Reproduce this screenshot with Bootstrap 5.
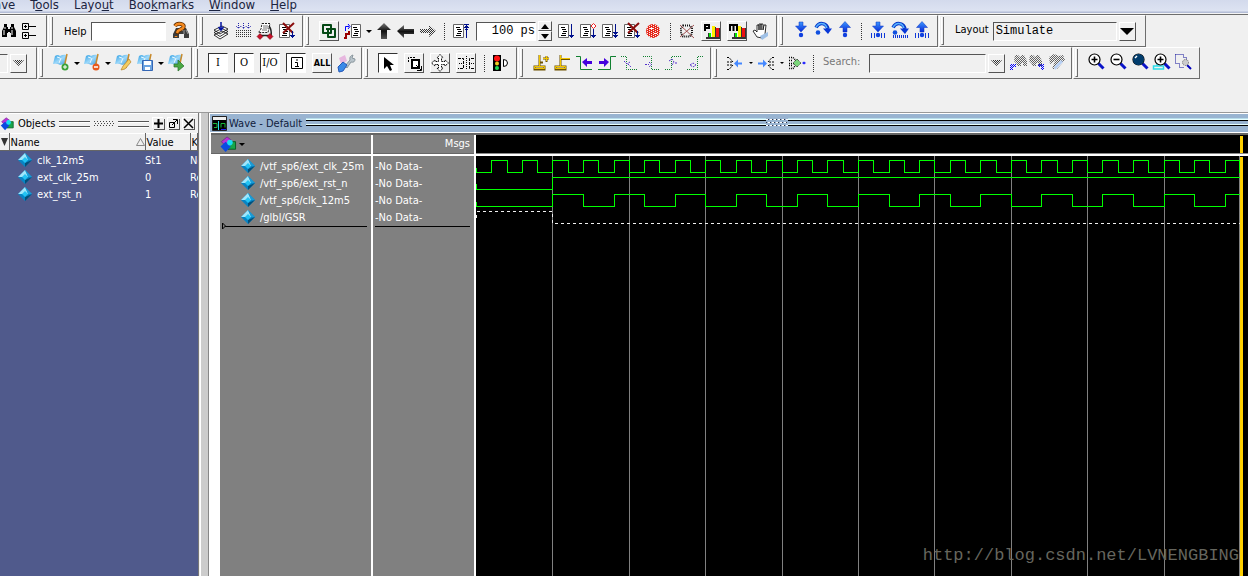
<!DOCTYPE html>
<html lang="en">
<head>
<meta charset="utf-8">
<meta name="viewport" content="width=device-width, initial-scale=1">
<title>Wave - Default</title>
<link href="https://cdn.jsdelivr.net/npm/bootstrap@5.3.0/dist/css/bootstrap.min.css" rel="stylesheet">
<style>
:root{--face:#f0f0f0;--edge:#6d6d6d;--grey:#808080;--slate:#505a8c;--ui:"DejaVu Sans Condensed","DejaVu Sans",sans-serif;--code:"Liberation Mono",monospace}
body{font-family:var(--ui);font-size:11px;line-height:17px;color:#000;background:var(--face);overflow:hidden}
button,input,select{font:inherit;color:inherit;border-radius:0;padding:0}
button{background:none;border:0}
/* menu */
.menubar{height:15px;gap:15px;margin-left:-6px;font-size:13px;line-height:9px;background:linear-gradient(#d3daec,#dde3f2 11px,#b4bdd6 12px,#b4bdd6 13px,#f4f4f4 13px,#f4f4f4 14px,#6d6d6d 14px)}
.menubar a{color:#1c2440;text-decoration:none}
/* tool bars */
.bars{height:32px;gap:1px}
.bar{flex:none;border:1px solid #fff;border-right-color:var(--edge);border-bottom-color:var(--edge)}
.bar.grip::before{content:"";flex:none;width:3px;height:28px;margin:0 7px 0 1px;border-left:1px solid #fff;border-right:1px solid var(--edge);border-bottom:1px solid var(--edge)}
.b-edit{width:47px}.b-help{width:149px}.b-compile{width:105px}.b-run{width:473px}.b-step{width:160px}.b-layout{width:207px}
.b-filter{width:37px}.b-mark{width:154px}.b-types{width:169px}.b-mode{width:154px}.b-cursor{width:193px}.b-search{width:360px}.b-zoom{width:127px}
.tool{flex:none;width:22px;height:22px}
.tool.slim{width:18px}
.tool svg,.boxed svg{width:20px;height:20px;display:block;margin:auto}
.tool.slim svg{margin-left:-1px}
.boxed{flex:none;width:20px;height:20px;margin:0 3px;border:1px solid #fff;border-right-color:#555;border-bottom-color:#555}
.boxed svg{margin:-1px}
.pressed{background:#fff;border-color:#333 #fff #fff #333}
.letter{line-height:18px;text-align:center;font-family:"DejaVu Serif Condensed","DejaVu Serif",serif}
.allbtn{font-size:9px;line-height:18px;font-weight:700}
.caret{width:9px;height:22px}
.caret::after{content:"";display:block;margin:auto;width:5px;border:3px solid transparent;border-top-color:#000;border-bottom:0}
.caret.tiny::after{border-width:2px;border-bottom:0;width:4px}
.split{width:11px;height:17px;background:repeating-linear-gradient(#333 0 1px,transparent 1px 2px) center/1px 100% no-repeat}
.field{border:1px solid #fff;border-top-color:#555;border-left-color:#555;height:19px;background:#fff;outline:0}
.field.flat{background:var(--face)}
.mono{font-family:var(--code);font-size:12px}
.w-help{width:75px}.w-len{width:60px}.w-lay{width:124px;padding-left:2px;appearance:none}.w-filter{width:8px}.w-search{width:117px}
.drop{width:17px;height:19px;margin-left:2px;border:1px solid #fff;border-right-color:#555;border-bottom-color:#555}
.drop svg{display:block;margin:auto}
.spins{margin:0 3px 0 2px}
.spin{width:14px;height:10px;border:1px solid #fff;border-right-color:#555;border-bottom-color:#555}
.spin::after{content:"";display:block;width:8px;margin:auto;border:4px solid transparent;border-top:0;border-bottom:5px solid #000}
.spin.down::after{border-bottom:0;border-top:5px solid #000}
.dim{color:#777}
/* work area */
.work{margin-top:33px;border-top:1px solid #999;min-height:0}
.objects{width:199px;border-right:1px solid #777;background:var(--slate)}
.ptitle{height:20px;background:var(--face);border-top:1px solid #fff}
.ptitle>svg{width:14px;height:16px}
.lines{height:6px;border-top:1px solid #555;border-bottom:1px solid #555;box-shadow:0 1px #fff,inset 0 1px #fff}
.dots{width:20px;height:6px;background:repeating-linear-gradient(90deg,#444 0 1px,transparent 1px 3px) 0 0/100% 1px no-repeat,repeating-linear-gradient(90deg,transparent 0 1px,#444 1px 2px,transparent 2px 3px) 0 2px/100% 1px no-repeat,repeating-linear-gradient(90deg,#444 0 1px,transparent 1px 3px) 0 4px/100% 1px no-repeat}
.wbtn{width:11px;height:11px;margin-left:4px;box-shadow:1px 1px #555,-1px -1px #fff}
.wbtn svg{display:block;width:11px;height:11px}
.otable{table-layout:fixed;width:100%;color:#fff;border-collapse:collapse}
.otable th{height:17px;line-height:15px;background:var(--face);color:#000;font-weight:400;border-right:1px solid #666;border-bottom:1px solid #666;border-top:1px solid #fff;padding:0 0 0 1px;white-space:nowrap;overflow:hidden}
.otable td{height:17px;padding:0;white-space:nowrap;overflow:hidden}
.otable tbody::before{content:"";display:block;height:1px}
.c-sort{width:9px}.c-name{width:136px}.c-value{width:45px}
.gem{width:16px;height:16px;flex:none}
.sash{width:7px;margin:0 0 0 2px;background:#ccc;box-shadow:-1px 0 #fff}
.wave{border-left:1px solid #888;background:#fff;min-width:0}
.wtitle{height:19px;margin-left:1px;border-top:1px solid #fff;background:#99b4d1;color:#10203c}
.wtitle>svg{margin:1px 1px 0 2px}
.wtitle .lines{border-color:#000;box-shadow:0 -1px #e6ffff,0 -2px #b7dcea,inset 0 -1px #e6ffff}
.wdots{width:22px;height:8px;background:repeating-linear-gradient(90deg,#fff 0 2px,#334 2px 3px,transparent 3px 4px) 0 0/100% 1px no-repeat,repeating-linear-gradient(90deg,#334 0 1px,transparent 1px 2px,#fff 2px 4px) 0 3px/100% 1px no-repeat,repeating-linear-gradient(90deg,#fff 0 2px,#334 2px 3px,transparent 3px 4px) 0 6px/100% 1px no-repeat}
.panes{margin:1px 0 0 2px;min-height:0;border-top:2px solid #666}
.names{width:162px;border-right:2px solid #fff}
.msgs{width:103px;border-right:2px solid #fff}
.phead{height:19px;background:var(--grey);color:#fff;border-bottom:1px solid #666;margin-bottom:2px}
.pbody{background:var(--grey);color:#fff;padding-top:2px}
.names .pbody{margin-left:9px}
.sig{height:17px;white-space:nowrap}
.endline{height:1px;background:#000;margin-right:4px}
.names .endline{margin-left:2px}
.msgs .pbody{padding-left:2px}
.canvas{background:#000;min-width:0}
.canvas svg{display:block}
.ruler{height:19px;background:#000;border-bottom:1px solid #888}
.cursorhead{width:3px;height:17px;margin:1px 0 0 764px;background:#ffd000}
.plot{border-top:2px solid #fff;overflow:hidden;min-height:0}
.plot svg{width:100%;height:100%}
.stamp{right:9px;bottom:9px;font:17px/22px var(--code);color:#66665e}
</style>
</head>
<body class="vh-100 d-flex flex-column">
<svg width="0" height="0" class="position-absolute" aria-hidden="true">
<defs>
<linearGradient id="gb" x2="0" y2="1"><stop stop-color="#3c98ff"/><stop offset="1" stop-color="#0828d8"/></linearGradient>
<linearGradient id="gk" x2="0" y2="1"><stop stop-color="#777"/><stop offset=".5" stop-color="#111"/><stop offset="1" stop-color="#555"/></linearGradient>
<linearGradient id="gf" x2="1" y2="1"><stop stop-color="#2a9be0"/><stop offset=".5" stop-color="#9cd8fa"/><stop offset="1" stop-color="#3b98d8"/></linearGradient>
<pattern id="dither" width="2" height="2" patternUnits="userSpaceOnUse"><path d="M0 0h1v1H0zM1 1h1v1H1z" fill="#333"/></pattern>
<pattern id="ditherb" width="2" height="2" patternUnits="userSpaceOnUse"><path d="M0 0h1v1H0zM1 1h1v1H1z" fill="#00f"/></pattern>
<pattern id="ditherr" width="4" height="2" patternUnits="userSpaceOnUse"><path d="M0 0h3v1H0zM2 1h3v1H2zM0 1h1v1H0z" fill="#e8281a"/></pattern>
<symbol id="bino" viewBox="0 0 20 20"><path d="M5 3h3v3h1v2h2V6h1V3h3v3l1 2 1 2v6h-5v-4h-1v-1H9v1H8v4H3v-6l1-2 1-2z" fill="#000"/><path d="M6 6v2M5 9v5M13 6v2M13 9v5" stroke="#fff"/></symbol>
<symbol id="tree" viewBox="0 0 20 20"><path d="M3.500 2.500h6v6h-6zM3.500 11.500h6v6h-6zM5 5.500h3M6.500 4v3M5 14.500h3M6.500 13v3M10 5.500h7M10 14.500h7" fill="none" stroke="#000"/></symbol>
<symbol id="find" viewBox="0 0 20 20"><path d="M5 7h3v3h4V7h3l3 6v4h-5v-4H8v4H2v-4z" fill="#3c3c3c"/><path d="M13 9v4M15 9l2 4" stroke="#999"/><path d="M4 5q2-3 6-2 4 1 2 4L7 10l-1 3" fill="none" stroke="#5b2c00" stroke-width="4"/><path d="M4 5q2-3 6-2 4 1 2 4L7 10l-1 2M5 15v1" fill="none" stroke="#f58a1f" stroke-width="2.500"/></symbol>
<symbol id="stack" viewBox="0 0 20 20"><path d="M3 14l8-4 6 3-8 5zM3 11.500l8-4 6 3-8 5zM3 9l8-4 6 3-8 5z" fill="#fff" stroke="#000" stroke-width=".8"/><path d="M10 1v8M7.500 6l2.500 3 2.500-3" stroke="#0010a0" stroke-width="1.500" fill="none"/></symbol>
<symbol id="grid" viewBox="0 0 20 20"><path d="M3 9.500h15M3 11.500h15M3 13.500h15M3 15.500h15" stroke="#333" stroke-dasharray="1 1"/><path d="M5.500 2v5M10.500 2v5M15.500 2v5M3 5l2.500 2.500L8 5l2.500 2.500L13 5l2.500 2.500L18 5" stroke="#22a" stroke-dasharray="1 1" fill="none"/></symbol>
<symbol id="cart" viewBox="0 0 20 20"><path d="M7 2.500h8l-2 9H3.500L6 8z" fill="#fff" stroke="#222" stroke-dasharray="2 1"/><path d="M8 5h5M8 7h5M7 9h5" stroke="#777"/><path d="M14 5q3 4 2 10M4 14.500h11" stroke="#222" stroke-width="1.500" fill="none"/><path d="M5 12.500l3 3-3 3-3-3zM15 12.500l3 3-3 3-3-3z" fill="#c8102b" stroke="#600" stroke-width=".5"/></symbol>
<symbol id="page" viewBox="0 0 20 20"><path d="M2.500 3.500h10v13h-10z" fill="#fff" stroke="#666"/><path d="M5 6.500h4M6 8.500h4M7 10.500h4M6 12.500h4M5 14.500h5" stroke="#000"/></symbol>
<symbol id="pagex" viewBox="0 0 20 20"><use href="#page"/><path d="M6 2l10 10M17 2L6 12" stroke="#8a0c0c" stroke-width="2"/><path d="M15.500 10v7M13 14.500h5M14 15.500h3" stroke="#00108c"/></symbol>
<symbol id="run" viewBox="0 0 20 20"><use href="#page"/><path d="M15.500 3v14M13 14.500h5M14 15.500h3" stroke="#00108c"/></symbol>
<symbol id="run2" viewBox="0 0 20 20"><use href="#page"/><path d="M15.500 3v14M13 11.500h5M14 12.500h3M13 14.500h5M14 15.500h3" stroke="#00108c"/></symbol>
<symbol id="runc" viewBox="0 0 20 20"><use href="#page"/><path d="M15.500 8v9M13 14.500h5M14 15.500h3" stroke="#00108c"/><path d="M15.500 2.500l2.500 2.500-2.500 2.500L13 5z" fill="#fff" stroke="#e22"/></symbol>
<symbol id="restart" viewBox="0 0 20 20"><use href="#page"/><path d="M15.500 4v13M13 3.500h5M14 5.500h3M13 6.500h5M14 8.500h3" stroke="#00108c"/></symbol>
<symbol id="link" viewBox="0 0 20 20"><path d="M4 4h8v8H4zM9 8h7v8H9z" fill="none" stroke="#064a16" stroke-width="2" stroke-linejoin="round"/><path d="M7 8h5v4" stroke="#064a16" stroke-width="2" fill="none"/></symbol>
<symbol id="stepin" viewBox="0 0 20 20"><path d="M8.500 3.500h9v13h-9z" fill="#fff" stroke="#666"/><path d="M10 6.500h4M11 8.500h4M12 10.500h4M11 12.500h4M10 14.500h5" stroke="#000"/><path d="M2.500 10V5.500H6M5 3l2 2.500L5 8" stroke="#00f" fill="none"/><path d="M6 10v3H3v4H1" stroke="#900" stroke-width="2" fill="none"/></symbol>
<symbol id="up" viewBox="0 0 20 20"><path d="M10 2l7 7h-4v9H7V9H3z" fill="url(#gk)"/></symbol>
<symbol id="left" viewBox="0 0 20 20"><path d="M1 10l7-6v4h10v5H8v4z" fill="url(#gk)"/></symbol>
<symbol id="right" viewBox="0 0 20 20"><path d="M18 10l-7-6v4H2v4h9v4z" fill="url(#dither)"/></symbol>
<symbol id="stop" viewBox="0 0 20 20"><circle cx="9" cy="10" r="7" fill="url(#ditherr)"/><path d="M6 7.500h3M10 12.500h3" stroke="#fff"/></symbol>
<symbol id="nofind" viewBox="0 0 20 20"><path d="M6 4.500h7l2 3v5l-2 3H6l-2-3v-5z" fill="none" stroke="#111" stroke-width="2" stroke-dasharray="1 1"/><path d="M3 4l14 13M17 4L3 16" stroke="#8a2a2a" stroke-width=".8"/></symbol>
<symbol id="bars" viewBox="0 0 20 20"><path d="M7 12h3v6H7zM11 6h4v12h-4zM15 7h4v11h-4zM5 16h14v2H5z" fill="#333"/><path d="M8 12h2v4H8z" fill="#0e0"/><path d="M11 5h3v11h-3z" fill="#fe0"/><path d="M15 7h3v9h-3z" fill="#e11"/></symbol>
<symbol id="prof" viewBox="0 0 20 20"><use href="#bars"/><path d="M4 10V4h4v3H5" fill="none" stroke="#000" stroke-width="2"/></symbol>
<symbol id="mem" viewBox="0 0 20 20"><use href="#bars"/><path d="M3 10V4h7v6M6.500 4v6" fill="none" stroke="#000" stroke-width="2"/></symbol>
<symbol id="hand" viewBox="0 0 20 20"><path d="M6 16l-4-6 2-1 2 2V4h2v5V3h2v6V3h2v6l1-5h2l-1 9-3 4z" fill="#fff" stroke="#000" stroke-width=".8"/><path d="M9 15l8-4v4l-6 4z" fill="#9fc0e6"/></symbol>
<symbol id="bdown" viewBox="0 0 20 20"><path d="M8 1h4v4h3.500L10 11 4.500 5H8z" fill="url(#gb)" stroke="#0830c0" stroke-width=".5"/><circle cx="10" cy="14" r="2.200" fill="#1040e0"/></symbol>
<symbol id="bup" viewBox="0 0 20 20"><path d="M10 .5l5.500 6H12v4.500H8V6.500H4.500z" fill="url(#gb)" stroke="#0830c0" stroke-width=".5"/><circle cx="10" cy="14" r="2.200" fill="#1040e0"/></symbol>
<symbol id="bover" viewBox="0 0 20 20"><path d="M3 6.500Q6 1 11 3q3 1 4 5" fill="none" stroke="#0838c8" stroke-width="3.500"/><path d="M3 6.500Q6 1 11 3q2 1 3 4" fill="none" stroke="#58b4ff" stroke-width="1.500"/><path d="M10 7.500h9l-4 5.500z" fill="#0838d8"/><circle cx="5" cy="11.500" r="2.300" fill="#1050e0"/></symbol>
<symbol id="ticks" viewBox="0 0 20 20"><path d="M3.500 12v5M6.500 12v5M13.500 12v5M16.500 12v5" stroke="#1038d8"/></symbol>
<symbol id="bdown2" viewBox="0 0 20 20"><use href="#bdown"/><use href="#ticks"/></symbol>
<symbol id="bup2" viewBox="0 0 20 20"><use href="#bup"/><use href="#ticks"/></symbol>
<symbol id="bover2" viewBox="0 0 20 20"><use href="#bover"/><path d="M3 15.500h15" stroke="#1038d8" stroke-width="3" stroke-dasharray="1 1"/></symbol>
<symbol id="flag" viewBox="0 0 20 20"><path d="M4 3q3-2 5 0 3-2 7-1l-2 10q-3-1-5 0-3-2-7-1z" fill="url(#gf)"/><path d="M6 4l3 1M10 5l-2 5" stroke="#e8f8ff"/><path d="M16 1l-3 14" stroke="#c88a2c" stroke-width="1.500"/></symbol>
<symbol id="fadd" viewBox="0 0 20 20"><use href="#flag"/><circle cx="14" cy="14" r="3.500" fill="#3aa23a"/><path d="M12 14h4M14 12v4" stroke="#fff"/></symbol>
<symbol id="fdel" viewBox="0 0 20 20"><use href="#flag"/><circle cx="14" cy="14" r="3.500" fill="#e8591a"/><path d="M12 14h4" stroke="#fff" stroke-width="1.500"/></symbol>
<symbol id="fedit" viewBox="0 0 20 20"><use href="#flag"/><path d="M8 17l2-4 6-7 2 3-6 7z" fill="#f3cd62" stroke="#b5812a" stroke-width=".7"/></symbol>
<symbol id="fsave" viewBox="0 0 20 20"><use href="#flag"/><path d="M7.500 7.500h10v10h-10z" fill="#6ba3e0" stroke="#3567b5"/><path d="M9 8h7v4H9zM10 14h5v3h-5z" fill="#fff"/></symbol>
<symbol id="fgo" viewBox="0 0 20 20"><use href="#flag"/><path d="M8 11h4V7l6 6-6 5v-4H8z" fill="#4aa843" stroke="#27702a" stroke-width=".7"/></symbol>
<symbol id="wrench" viewBox="0 0 20 20"><path d="M3 5l6-3 2 6-6 3z" fill="#e7b7df"/><path d="M9 13l5-6q-1-4 3-5l-1 3 3 1q0 4-4 3l-4 6z" fill="#b9c4cb" stroke="#8a979e"/><path d="M2 14l5-5 4 3-4 6-4 1z" fill="#3a8ae8" stroke="#2458b8"/></symbol>
<symbol id="infobox" viewBox="0 0 20 20"><path d="M5.500 4.500h11v11h-11z" fill="none" stroke="#000"/><path d="M11 6v2M9 9.500h2.500V13M9 13.500h4" stroke="#000" fill="none"/></symbol>
<symbol id="arrow" viewBox="0 0 20 20"><path d="M6 4v12l3-3 3 5 2-1-2-5h4z" fill="#000"/></symbol>
<symbol id="zoomsel" viewBox="0 0 20 20"><path d="M4.500 9V4.500H11" stroke="#000" stroke-dasharray="2 1" fill="none"/><path d="M8 7h7v8H8z" fill="#fff" stroke="#000" stroke-width="2"/><path d="M12 12l5 5M17.500 13v4.500H13" stroke="#000" fill="none"/></symbol>
<symbol id="pan" viewBox="0 0 20 20"><path d="M10 1.500l3 3-1.500.5v3.500H15V7l3.500 3-3.500 3v-1.500h-3.500V15H13l-3 3.500L7 15h1.500v-3.500H5V13l-3.500-3L5 7v1.500h3.500V5H7z" fill="#fff" stroke="#000" stroke-dasharray="1.500 .8"/></symbol>
<symbol id="edges" viewBox="0 0 20 20"><path d="M2 5.500h5.500v10H2M18 5.500h-4.500v10H18" stroke="#000" fill="none" stroke-dasharray="3 1"/><path d="M10.500 3v14M3 10.500h3M15 10.500h4" stroke="#000" stroke-dasharray="1 1"/></symbol>
<symbol id="light" viewBox="0 0 20 20"><path d="M2 2h8v16H2z" fill="#000"/><circle cx="6" cy="5.500" r="3" fill="#f11"/><circle cx="6" cy="10.500" r="2" fill="#ec2"/><circle cx="6" cy="15" r="2" fill="#2d5"/><path d="M12.500 6.500v7q4 0 4-3.500t-4-3.500z" fill="#fff" stroke="#000"/></symbol>
<symbol id="curadd" viewBox="0 0 20 20"><path d="M8.500 2v11M3.500 13.500h10v3h-10zM9 9.500h3M12 5.500h6M15.500 3v6" stroke="#6e5200" fill="none" stroke-width="2"/><path d="M8.500 2v11M3.500 13.500h10v2h-10zM12 5.500h6M15.500 3v5" stroke="#f2c500" fill="none"/></symbol>
<symbol id="curdel" viewBox="0 0 20 20"><path d="M7.500 2v11M2.500 13.500h10v3h-10zM8 6h9" stroke="#6e5200" fill="none" stroke-width="2"/><path d="M7.500 2v11M2.500 13.500h10v2h-10zM8 5.500h9" stroke="#f2c500" fill="none"/></symbol>
<symbol id="eprev" viewBox="0 0 20 20"><path d="M1 3.500h4.500v13H17" fill="none" stroke="#108030"/><path d="M7 9l5-4v3h5v3h-5v3z" fill="#40d"/></symbol>
<symbol id="enext" viewBox="0 0 20 20"><path d="M1 16.500h12.500v-13H19" fill="none" stroke="#108030"/><path d="M12 9L7 5v3H2v3h5v3z" fill="#40d"/></symbol>
<symbol id="fallp" viewBox="0 0 20 20"><path d="M2 3.500h5.500v13H18" fill="none" stroke="#108030" stroke-dasharray="1 1"/><path d="M5 8l3 3 3-2M9 11l3 3" fill="none" stroke="#53c" stroke-dasharray="2 1"/></symbol>
<symbol id="falln" viewBox="0 0 20 20"><path d="M2 3.500h8.500v13H18" fill="none" stroke="#108030" stroke-dasharray="1 1"/><path d="M4 11.500h4M8 9l2.500 2.500L8 14" fill="none" stroke="#53c" stroke-dasharray="2 1"/></symbol>
<symbol id="risep" viewBox="0 0 20 20"><path d="M2 16.500h6.500v-13H18" fill="none" stroke="#108030" stroke-dasharray="1 1"/><path d="M6 8l3-2 2 3-2 3M12 10h3" fill="none" stroke="#53c" stroke-dasharray="2 1"/></symbol>
<symbol id="risen" viewBox="0 0 20 20"><path d="M2 16.500h10.500v-13H18" fill="none" stroke="#108030" stroke-dasharray="1 1"/><path d="M5 12l3-2 3 2-3 2z" fill="none" stroke="#53c" stroke-dasharray="2 1"/></symbol>
<symbol id="fan1" viewBox="0 0 20 20"><path d="M2 4.500h2l4 4.500H2M2 16.500h2l4-4.500H2" stroke="#000" stroke-dasharray="2 1" fill="none"/><path d="M9 10.500l4-4v3h4v2h-4v3z" fill="#48f"/></symbol>
<symbol id="fan2" viewBox="0 0 20 20"><path d="M18 4.500h-2l-4 4.500h6M18 16.500h-2l-4-4.500h6" stroke="#000" stroke-dasharray="2 1" fill="none"/><path d="M11 10.500l-4-4v3H2v2h5v3z" fill="#48f"/></symbol>
<symbol id="fan3" viewBox="0 0 20 20"><path d="M2 4.500h4l5 5-5 6H2M2 7.500h4M2 12.500h4M2 10.500h6" stroke="#000" stroke-width="1.500" stroke-dasharray="1 1" fill="none"/><path d="M10 6l4 4-4 4-4-4z" fill="#7ad67a" stroke="#222" stroke-dasharray="1 1"/><path d="M15 10l2-1.500 2 1.500-2 1.500z" fill="#22f"/></symbol>
<symbol id="dbino" viewBox="0 0 20 20"><path d="M7 2h3l2 2 2-2h2l3 6v5h-4v-3h-2v3H9v-2L6 8z" fill="url(#dither)" opacity=".75"/></symbol>
<symbol id="sprev" viewBox="0 0 20 20"><use href="#dbino"/><path d="M2 11h6v3H5v3H2z" fill="url(#ditherb)"/></symbol>
<symbol id="snext" viewBox="0 0 20 20"><use href="#dbino" x="-3"/><path d="M12 11h6v6h-3v-3h-3z" fill="url(#ditherb)"/></symbol>
<symbol id="sopt" viewBox="0 0 20 20"><path d="M3 4l5-3 5 2 4-1 2 5-8 9H6L9 8 4 11z" fill="url(#dither)" opacity=".75"/><path d="M8 14l7-7 2 2-8 8z" fill="#b7d0f4"/></symbol>
<symbol id="lens" viewBox="0 0 20 20"><path d="M12.500 10.500l5 5" stroke="#0a14c8" stroke-width="3"/><circle cx="8.500" cy="6.500" r="5.500" fill="#fff" stroke="#000" stroke-width="1.200"/></symbol>
<symbol id="zin" viewBox="0 0 20 20"><use href="#lens"/><path d="M5.500 6.500h6M8.500 3.500v6" stroke="#000" stroke-width="1.600"/></symbol>
<symbol id="zout" viewBox="0 0 20 20"><use href="#lens"/><path d="M5.500 6.500h6" stroke="#000" stroke-width="1.600"/></symbol>
<symbol id="zfull" viewBox="0 0 20 20"><use href="#lens"/><circle cx="8.500" cy="6.500" r="5.500" fill="#003c6c"/><path d="M5 5l2-2" stroke="#fff" stroke-width="1.500"/></symbol>
<symbol id="zcur" viewBox="0 0 20 20"><path d="M1.500 13h10v3h-10zM5 2v11" stroke="#29dbe8" stroke-width="1.500" fill="none"/><use href="#zin"/></symbol>
<symbol id="zarea" viewBox="0 0 20 20"><path d="M1.500 1.500h8v3h3v3M1.500 1.500v9h4v4h4" stroke="#11119a" fill="none" stroke-dasharray="1 1"/><path d="M13 12l4 4" stroke="#00b" stroke-width="2"/><circle cx="11.500" cy="9.500" r="3" fill="#ccc" stroke="#666" stroke-dasharray="1 1"/></symbol>
<symbol id="gem" viewBox="0 0 16 16"><path d="M8 1l7 7-7 7-7-7z" fill="#0784c4"/><path d="M8 1l3.500 7H8L4.500 8 1 8z" fill="#9fe6fb"/><path d="M8 1l7 7-4 0z" fill="#1a9bd6"/><path d="M15 8l-7 7v-4z" fill="#044e78"/><path d="M8 5l3 3-3 3-3-3z" fill="#22c3f3"/></symbol>
<symbol id="shapes" viewBox="0 0 18 18"><path d="M9 6h8v8H9z" fill="#18a64a" stroke="#075b22"/><path d="M2 6l6-5 4 3-6 6z" fill="#b832d8" stroke="#60107a" stroke-width=".6"/><path d="M6.500 6l5.500 5-5.500 6L1 11z" fill="#0b4be0"/><circle cx="11" cy="7" r="3" fill="#18dff5"/></symbol>
<symbol id="ddrop" viewBox="0 0 11 6"><path d="M0 0h11L5.500 6z" fill="url(#dither)"/></symbol>
</defs>
</svg>

<nav class="menubar d-flex flex-shrink-0" aria-label="Menu">
<a href="#">ave</a><a href="#">T<u>o</u>ols</a><a href="#">Layo<u>u</u>t</a><a href="#">Boo<u>k</u>marks</a><a href="#"><u>W</u>indow</a><a href="#"><u>H</u>elp</a>
</nav>

<div class="bars d-flex flex-shrink-0">
<div class="bar b-edit d-flex align-items-center border-start-0">
<button class="tool slim" aria-label="Find"><svg><use href="#bino"/></svg></button><button class="tool" aria-label="Expand"><svg><use href="#tree"/></svg></button></div>
<div class="bar b-help grip d-flex align-items-center pe-1"><label for="help" class="ms-1 me-1">Help</label><input id="help" class="field w-help ms-auto me-1"><button class="tool" aria-label="Search help"><svg><use href="#find"/></svg></button></div>
<div class="bar b-compile grip d-flex align-items-center"><button class="tool" aria-label="Compile"><svg><use href="#stack"/></svg></button><button class="tool" aria-label="Compile all"><svg><use href="#grid"/></svg></button><button class="tool" aria-label="Simulate"><svg><use href="#cart"/></svg></button><button class="tool" aria-label="Break"><svg><use href="#pagex"/></svg></button></div>
<div class="bar b-run grip d-flex align-items-center"><button class="boxed" aria-label="Link"><svg><use href="#link"/></svg></button><button class="tool" aria-label="Step"><svg><use href="#stepin"/></svg></button><button class="caret" aria-label="Step options"></button><button class="tool" aria-label="Up"><svg><use href="#up"/></svg></button><button class="tool" aria-label="Back"><svg><use href="#left"/></svg></button><button class="tool" aria-label="Forward"><svg><use href="#right"/></svg></button><span class="split"></span><button class="tool" aria-label="Restart"><svg><use href="#restart"/></svg></button><input class="field mono w-len text-end ms-1" value="100 ps" aria-label="Run length"><span class="spins d-flex flex-column"><button class="spin" aria-label="More"></button><button class="spin down" aria-label="Less"></button></span><button class="tool" aria-label="Run"><svg><use href="#run"/></svg></button><button class="tool" aria-label="Continue"><svg><use href="#runc"/></svg></button><button class="tool" aria-label="Run all"><svg><use href="#run2"/></svg></button><button class="tool" aria-label="Break run"><svg><use href="#pagex"/></svg></button><button class="tool" aria-label="Stop"><svg><use href="#stop"/></svg></button><span class="split"></span><button class="tool" aria-label="Clear"><svg><use href="#nofind"/></svg></button><button class="boxed" aria-label="Profile"><svg><use href="#prof"/></svg></button><button class="boxed" aria-label="Memory"><svg><use href="#mem"/></svg></button><button class="tool" aria-label="Grab"><svg><use href="#hand"/></svg></button></div>
<div class="bar b-step grip d-flex align-items-center"><button class="tool" aria-label="Step into"><svg><use href="#bdown"/></svg></button><button class="tool" aria-label="Step over"><svg><use href="#bover"/></svg></button><button class="tool" aria-label="Step out"><svg><use href="#bup"/></svg></button><span class="split"></span><button class="tool" aria-label="Step into current"><svg><use href="#bdown2"/></svg></button><button class="tool" aria-label="Step over current"><svg><use href="#bover2"/></svg></button><button class="tool" aria-label="Step out current"><svg><use href="#bup2"/></svg></button></div>
<div class="bar b-layout grip d-flex align-items-center"><label for="lay" class="ms-1 me-1 mb-1">Layout</label><select id="lay" class="field flat mono w-lay"><option>Simulate</option></select><button class="drop" aria-label="Open layouts"><svg width="14" height="7"><path d="M0 0h14L7 7z"/></svg></button></div>
</div>

<div class="bars d-flex flex-shrink-0">
<div class="bar b-filter d-flex align-items-center border-start-0"><input class="field flat w-filter border-start-0" aria-label="Filter"><button class="drop" aria-label="Open filters"><svg width="11" height="6"><use href="#ddrop"/></svg></button></div>
<div class="bar b-mark grip d-flex align-items-center"><button class="tool" aria-label="Add bookmark"><svg><use href="#fadd"/></svg></button><button class="caret" aria-label="Add options"></button><button class="tool" aria-label="Delete bookmark"><svg><use href="#fdel"/></svg></button><button class="caret" aria-label="Delete options"></button><button class="tool" aria-label="Edit bookmark"><svg><use href="#fedit"/></svg></button><button class="tool" aria-label="Save bookmark"><svg><use href="#fsave"/></svg></button><button class="caret" aria-label="Save options"></button><button class="tool" aria-label="Go to bookmark"><svg><use href="#fgo"/></svg></button></div>
<div class="bar b-types grip d-flex align-items-center"><button class="boxed pressed letter">I</button><button class="boxed pressed letter">O</button><button class="boxed pressed letter">I/O</button><button class="boxed pressed" aria-label="Internal"><svg><use href="#infobox"/></svg></button><button class="boxed allbtn">ALL</button><button class="tool" aria-label="Settings"><svg><use href="#wrench"/></svg></button></div>
<div class="bar b-mode grip d-flex align-items-center"><button class="boxed pressed" aria-label="Select"><svg><use href="#arrow"/></svg></button><button class="boxed" aria-label="Zoom mode"><svg><use href="#zoomsel"/></svg></button><button class="boxed" aria-label="Pan"><svg><use href="#pan"/></svg></button><button class="boxed" aria-label="Edit mode"><svg><use href="#edges"/></svg></button><span class="split"></span><button class="tool" aria-label="Stop drawing"><svg><use href="#light"/></svg></button></div>
<div class="bar b-cursor grip d-flex align-items-center"><button class="tool" aria-label="Add cursor"><svg><use href="#curadd"/></svg></button><button class="tool" aria-label="Delete cursor"><svg><use href="#curdel"/></svg></button><button class="tool" aria-label="Previous transition"><svg><use href="#eprev"/></svg></button><button class="tool" aria-label="Next transition"><svg><use href="#enext"/></svg></button><button class="tool" aria-label="Previous falling"><svg><use href="#fallp"/></svg></button><button class="tool" aria-label="Next falling"><svg><use href="#falln"/></svg></button><button class="tool" aria-label="Previous rising"><svg><use href="#risep"/></svg></button><button class="tool" aria-label="Next rising"><svg><use href="#risen"/></svg></button></div>
<div class="bar b-search grip d-flex align-items-center"><button class="tool" aria-label="Drivers"><svg><use href="#fan1"/></svg></button><button class="caret tiny" aria-label="Driver options"></button><button class="tool" aria-label="Readers"><svg><use href="#fan2"/></svg></button><button class="caret tiny" aria-label="Reader options"></button><button class="tool" aria-label="Expand net"><svg><use href="#fan3"/></svg></button><span class="split"></span><label for="srch" class="ms-1 me-auto mb-1 dim">Search:</label><input id="srch" class="field flat w-search"><button class="drop me-1" aria-label="Search history"><svg width="11" height="6"><use href="#ddrop"/></svg></button><button class="tool slim" aria-label="Search back"><svg><use href="#sprev"/></svg></button><button class="tool slim" aria-label="Search forward"><svg><use href="#snext"/></svg></button><button class="tool me-1" aria-label="Search options"><svg><use href="#sopt"/></svg></button></div>
<div class="bar b-zoom grip d-flex align-items-center"><button class="tool" aria-label="Zoom in"><svg><use href="#zin"/></svg></button><button class="tool" aria-label="Zoom out"><svg><use href="#zout"/></svg></button><button class="tool" aria-label="Zoom full"><svg><use href="#zfull"/></svg></button><button class="tool" aria-label="Zoom on cursor"><svg><use href="#zcur"/></svg></button><button class="tool" aria-label="Zoom area"><svg><use href="#zarea"/></svg></button></div>
</div>

<main class="work d-flex flex-fill">
<section class="objects flex-shrink-0 overflow-hidden">
<div class="ptitle d-flex align-items-center pe-1"><svg><use href="#shapes"/></svg><span class="ms-1 me-1">Objects</span><span class="lines flex-fill"></span><span class="dots ms-1 me-1"></span><span class="lines flex-fill"></span><button class="wbtn" aria-label="Add"><svg><path d="M1 5.500h9M5.500 1v9" stroke="#000" stroke-width="2"/></svg></button><button class="wbtn" aria-label="Undock"><svg><path d="M1.500 4.500h5v5h-5zM5 1.500h4.500V6M9 2L4 7" stroke="#000" fill="none"/></svg></button><button class="wbtn" aria-label="Close"><svg><path d="M1 1l9 9M10 1l-9 9" stroke="#000" stroke-width="1.500"/></svg></button></div>
<table class="otable">
<colgroup><col class="c-sort"><col class="c-name"><col class="c-value"><col></colgroup>
<thead><tr><th><svg width="7" height="8" class="d-block"><path d="M0 0h7L3.500 8z" fill="#333"/></svg></th><th><div class="d-flex justify-content-between align-items-center">Name<svg width="9" height="8"><path d="M4.500 .5l4 7h-8z" fill="none" stroke="#888"/></svg></div></th><th>Value</th><th>Kind</th></tr></thead>
<tbody>
<tr><td></td><td><span class="d-flex ms-2"><svg class="gem me-1"><use href="#gem"/></svg>clk_12m5</span></td><td>St1</td><td>Net</td></tr>
<tr><td></td><td><span class="d-flex ms-2"><svg class="gem me-1"><use href="#gem"/></svg>ext_clk_25m</span></td><td>0</td><td>Reg</td></tr>
<tr><td></td><td><span class="d-flex ms-2"><svg class="gem me-1"><use href="#gem"/></svg>ext_rst_n</span></td><td>1</td><td>Reg</td></tr>
</tbody></table>
</section>
<div class="sash flex-shrink-0"></div>
<section class="wave d-flex flex-column flex-fill">
<div class="wtitle d-flex align-items-center flex-shrink-0"><svg width="16" height="16"><path d="M.5.500h14v14H.5z" fill="#000" stroke="#222"/><path d="M1 1h13v3H1z" fill="#eee"/><path d="M1 7.500h4v4H2M9 11.500v-4h4v4" stroke="#18b838" fill="none"/><path d="M6.500 5v9" stroke="#2ad8e8"/><path d="M9 13.500h5" stroke="#22e"/></svg><span class="me-1">Wave - Default</span><span class="lines flex-fill"></span><span class="wdots"></span><span class="lines flex-fill"></span></div>
<div class="panes d-flex flex-fill">
<div class="names d-flex flex-column flex-shrink-0"><div class="phead d-flex align-items-center ps-2"><svg width="18" height="17"><use href="#shapes"/></svg><span class="caret d-flex align-items-center"></span></div>
<div class="pbody flex-fill">
<div class="sig d-flex ps-3"><svg class="gem ms-1 me-1"><use href="#gem"/></svg>/vtf_sp6/ext_clk_25m</div>
<div class="sig d-flex ps-3"><svg class="gem ms-1 me-1"><use href="#gem"/></svg>/vtf_sp6/ext_rst_n</div>
<div class="sig d-flex ps-3"><svg class="gem ms-1 me-1"><use href="#gem"/></svg>/vtf_sp6/clk_12m5</div>
<div class="sig d-flex ps-3"><svg class="gem ms-1 me-1"><use href="#gem"/></svg>/glbl/GSR</div>
<div class="endline"><svg width="5" height="7" class="d-block overflow-visible"><path d="M.5-3v6l3-3z" fill="#808080" stroke="#000"/></svg></div>
</div></div>
<div class="msgs d-flex flex-column flex-shrink-0"><div class="phead text-end pe-1">Msgs</div>
<div class="pbody flex-fill"><div class="sig">-No Data-</div><div class="sig">-No Data-</div><div class="sig">-No Data-</div><div class="sig">-No Data-</div><div class="endline"></div></div></div>
<div class="canvas d-flex flex-column flex-fill position-relative"><div class="ruler flex-shrink-0 overflow-hidden"><div class="cursorhead"></div></div>
<div class="plot flex-fill"><svg id="plot" shape-rendering="crispEdges" fill="none" role="img" aria-label="Waveforms"></svg></div>
<span class="stamp position-absolute">http://blog.csdn.net/LVNENGBING</span></div>
</div>
</section>
</main>
<script>
// Time runs in clock half periods; five of them make one grid division.
const half = 15.28, steps = 50, end = 764;
const at = n => Math.round(n * half) + .5;
let grid = '', clk = 'M0.5 12V16.500', div = 'M0.5 46V50.500H' + at(5);
for (let n = 5; n <= steps; n += 5) grid += `M${Math.min(at(n), end - .5)} 0V2000`;
for (let n = 1; n < steps; n++) clk += `H${at(n)}V${n % 2 ? 4.5 : 16.5}`;
clk += `H${end - .5}V16.5`;
for (let n = 5, up = true; n < steps; n += 2, up = !up) div += `H${at(n)}V${up ? 38.5 : 50.5}`;
div += 'H' + end;
const x = at(5);
const line = (d, c, extra = '') => `<path d="${d}" stroke="${c}" ${extra}/>`;
document.getElementById('plot').innerHTML =
  line(grid, '#808080') + line(clk, '#00ff00') + line(div, '#00ff00') +
  line(`M0.5 28V33.500H${x}V21.500H${end}`, '#00ff00') +
  line(`M1 55.500H${x}V67.500H${end}`, '#f0f0f0', 'stroke-dasharray="3 3"') +
  line('M0.5 59V62', '#f0f0f0') +
  line(`M${end + 1.5} 1V2000`, '#ffd000', 'stroke-width="3"');
</script>
<script src="https://cdn.jsdelivr.net/npm/bootstrap@5.3.0/dist/js/bootstrap.bundle.min.js"></script>
</body>
</html>
